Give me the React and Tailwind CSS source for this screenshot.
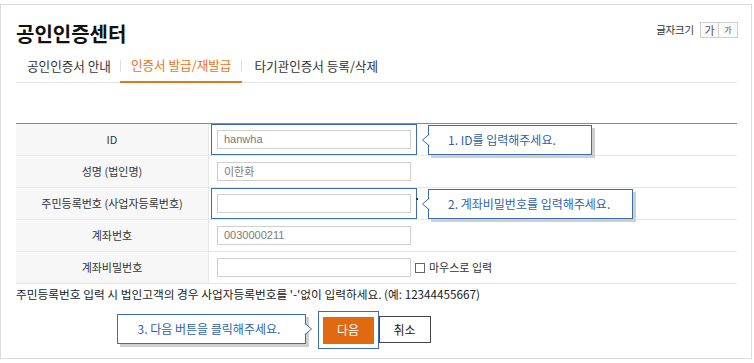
import React from 'react'

const kr = { fontFamily: '"Noto Sans CJK KR", "Noto Sans", sans-serif' }

function Arrow({ side }) {
  // little notch on a callout box pointing at the field
  if (side === 'left') {
    return (
      <svg width="8" height="12" viewBox="0 0 8 12" className="absolute left-[-7px] top-1/2 -translate-y-1/2">
        <polygon points="8,0 0.5,6 8,12" fill="#fff" />
        <polyline points="7.5,0 0.5,6 7.5,12" fill="none" stroke="#3b6db3" strokeWidth="1" />
      </svg>
    )
  }
  return (
    <svg width="8" height="12" viewBox="0 0 8 12" className="absolute right-[-7px] top-1/2 -translate-y-1/2">
      <polygon points="0,0 7.5,6 0,12" fill="#fff" />
      <polyline points="0.5,0 7.5,6 0.5,12" fill="none" stroke="#3b6db3" strokeWidth="1" />
    </svg>
  )
}

function Callout({ children, width, side = 'left', className = 'relative' }) {
  return (
    <div
      className={`h-[30px] bg-white border border-[#3b6db3] shadow-[3px_3px_0_#cfcfcf] flex items-center pl-[19px] text-[12px] text-[#2f5fa8] ${className}`}
      style={{ width }}
    >
      <Arrow side={side} />
      {children}
    </div>
  )
}

function Field({ value, highlight, extra }) {
  const input = (
    <div className="w-[194px] h-[19px] border border-[#cfcfcf] bg-white flex items-center pl-[6px] text-[11px] text-[#7a7a7a]"
      style={{ fontFamily: value && /[가-힣]/.test(value) ? kr.fontFamily : '"Liberation Sans", Arial, sans-serif' }}>
      {value}
    </div>
  )
  return (
    <div className="flex items-center h-full">
      {highlight ? (
        <div className="ml-[2px] h-full border border-[#3b6db3] px-[5px] flex items-center">{input}</div>
      ) : (
        <div className="ml-[8px]">{input}</div>
      )}
      {extra}
    </div>
  )
}

const rows = [
  {
    label: 'ID',
    value: 'hanwha',
    highlight: true,
    extra: <Callout width={164} className="relative ml-[11px]">1. ID를 입력해주세요.</Callout>,
  },
  { label: '성명 (법인명)', value: '이한화' },
  {
    label: '주민등록번호 (사업자등록번호)',
    value: '',
    highlight: true,
    extra: (
      <>
        <span className="w-[2px] h-[2px] bg-[#333] self-start mt-[10px] ml-[-1px]" />
        <Callout width={205} className="relative ml-[10px]">2. 계좌비밀번호를 입력해주세요.</Callout>
      </>
    ),
  },
  { label: '계좌번호', value: '0030000211' },
  {
    label: '계좌비밀번호',
    value: '',
    extra: (
      <label className="flex items-center ml-[4px] text-[11px] text-[#333]">
        <span className="w-[10px] h-[10px] border border-[#666] bg-white mr-[4px]" />
        마우스로 입력
      </label>
    ),
  },
]

export default function App() {
  return (
    <div className="w-[754px] h-[363px] bg-white pt-[4px]" style={kr}>
      <div className="w-[752px] h-[355px] border border-[#dadada] pl-[15px] pr-[14px]">
        <div className="flex justify-between items-start">
          <h1 className="pt-[17px] text-[20px] leading-[24px] font-bold text-[#111]">공인인증센터</h1>
          <div className="flex items-center pt-[17px] mr-[-1px]">
            <span className="text-[10.5px] text-[#333] mr-[6px] tracking-[-0.2px]">글자크기</span>
            <button className="w-[19px] h-[16px] border border-[#cfcfcf] bg-[#fafafa] text-[11px] leading-none text-[#555]">가</button>
            <button className="w-[19px] h-[16px] border border-l-0 border-[#cfcfcf] bg-[#fafafa] text-[8px] leading-none text-[#555]">가</button>
          </div>
        </div>

        <div className="mt-[1px] h-[36px] pt-[3px] flex items-stretch border-b border-[#e6e6e6] text-[12.6px] text-[#333]">
          <div className="flex items-center pl-[11px] pr-[9px]">공인인증서 안내</div>
          <span className="w-px h-[12px] bg-[#dcdcdc] self-center" />
          <div className="flex items-center text-[#e8741e] border-b-2 border-[#e8741e] mb-[-1px] ml-[-1px] px-[11px]">인증서 발급/재발급</div>
          <span className="w-px h-[12px] bg-[#dcdcdc] self-center ml-[-1px]" />
          <div className="flex items-center pl-[12px]">타기관인증서 등록/삭제</div>
        </div>

        <div className="mt-[40px] border-t border-[#8a8a8a]">
          {rows.map((r) => (
            <div key={r.label} className="flex h-[32px] border-b border-[#e6e6e6]">
              <div className="w-[193px] shrink-0 bg-[#f7f7f7] border-r border-[#e6e6e6] flex items-center justify-center text-[11px] text-[#333]">
                {r.label}
              </div>
              <Field value={r.value} highlight={r.highlight} extra={r.extra} />
            </div>
          ))}
        </div>

        <p className="h-[20px] leading-[20px] text-[11.7px] text-[#222]">
          주민등록번호 입력 시 법인고객의 경우 사업자등록번호를 '-'없이 입력하세요. (예: 12344455667)
        </p>

        <div className="mt-[7px] flex justify-center pr-[5px]">
          <div className="relative flex items-center">
            <Callout width={189} side="right" className="absolute right-[calc(100%+12px)] top-[3px] pl-[20px]">
              3. 다음 버튼을 클릭해주세요.
            </Callout>
            <div className="border border-[#3b6db3] p-[4px]">
              <button className="w-[51px] h-[27px] bg-[#e06a10] text-white text-[12px]">다음</button>
            </div>
            <button className="w-[52px] h-[27px] border border-[#444] bg-white text-[#222] text-[12px]">취소</button>
          </div>
        </div>
      </div>
    </div>
  )
}
